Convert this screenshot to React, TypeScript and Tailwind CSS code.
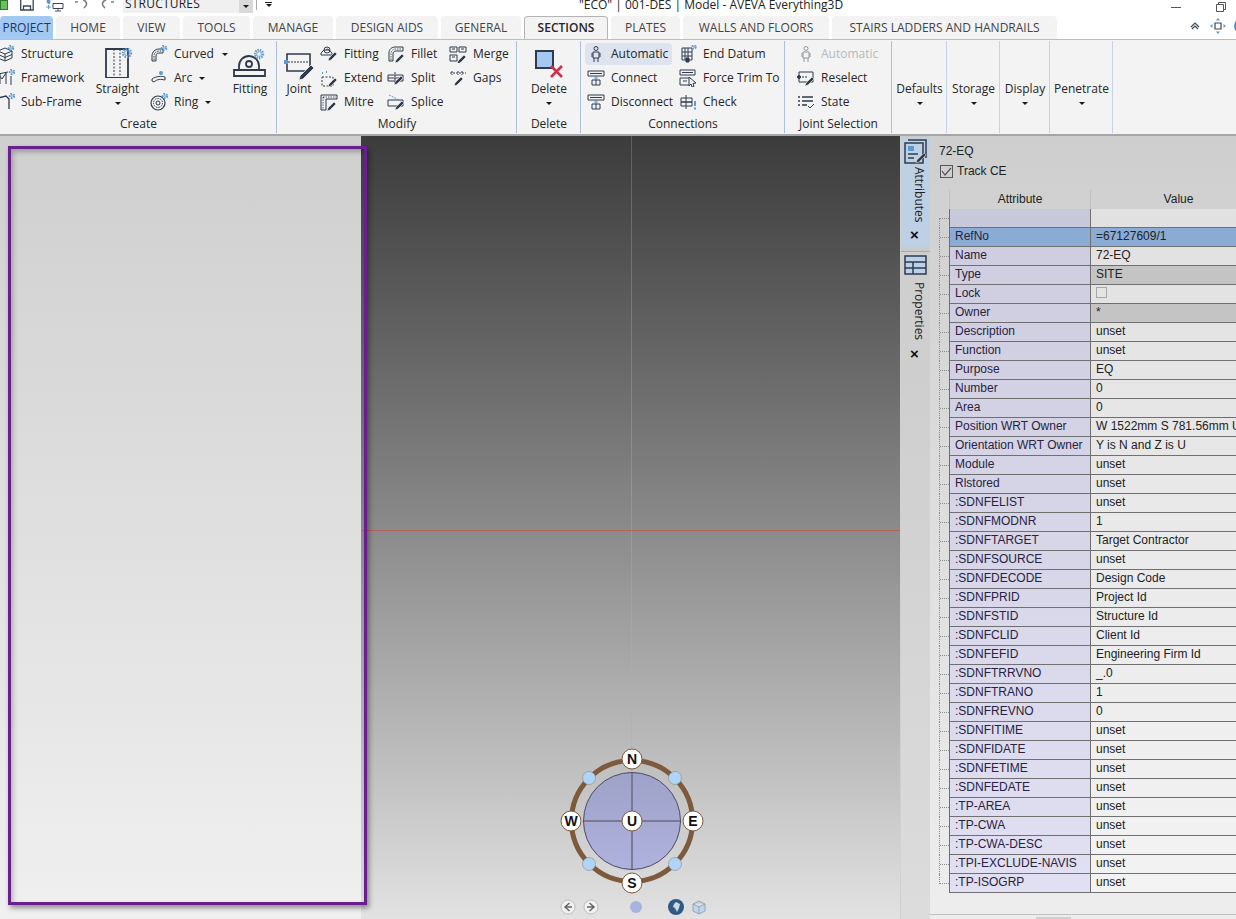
import type { ReactNode } from "react";

const ribbonFont = { fontFamily: '"Open Sans", "Noto Sans", sans-serif' };
const DARK = "#2f3b4c";
const BLUE = "#5b9bd5";

function Gear({ cx, cy, r = 3.5 }: { cx: number; cy: number; r?: number }) {
  return (
    <g fill="none" stroke={BLUE}>
      <circle cx={cx} cy={cy} r={r} strokeWidth="2.4" strokeDasharray="1.4 1" />
      <circle cx={cx} cy={cy} r={r - 1.6} strokeWidth="0.8" />
    </g>
  );
}

function Pencil({ x, y }: { x: number; y: number }) {
  return <path d={`M${x} ${y}l6-6 2 2-6 6-3 1z`} fill={DARK} stroke="#f3f3f3" strokeWidth="0.6" />;
}

function Ico({ children, w = 18, h = 18 }: { children: ReactNode; w?: number; h?: number }) {
  return (
    <svg width={w} height={h} viewBox={`0 0 ${w} ${h}`} fill="none" stroke={DARK} strokeWidth="1" className="shrink-0">
      {children}
    </svg>
  );
}

const icons: Record<string, ReactNode> = {
  structure: (
    <>
      <path d="M1 6l7-3 7 3v7l-7 3-7-3zM1 6l7 3 7-3M8 9v7M1 9.500l7 3 7-3" />
      <Gear cx={14} cy={3} r={2} />
    </>
  ),
  framework: (
    <>
      <path d="M1 5l10-2M3 5v10M9 4v11M14 7v9M1 5l4 5M9 4l-4 6" />
      <Gear cx={15} cy={3} r={2} />
    </>
  ),
  subframe: (
    <>
      <path d="M1 5l8-2 3 3v10M1 5v10" strokeWidth="1.300" />
      <Gear cx={15} cy={3} r={2} />
    </>
  ),
  curved: (
    <>
      <path d="M2 16v-5c0-4 3-7 7-7h4v4H9c-2 0-3 1-3 3v5z" />
      <path d="M4 15v-4c0-3 2-5 5-5h3" strokeDasharray="1.500 1" />
      <Gear cx={14} cy={3} r={2} />
    </>
  ),
  arc: (
    <>
      <path d="M2 10c4-3 10-3 13-2v3c-4-1-8-1-11 2l-2-1z" />
      <circle cx="11" cy="4" r="2" fill={BLUE} stroke="none" />
    </>
  ),
  ring: (
    <>
      <circle cx="8" cy="10" r="7" strokeWidth="1.200" />
      <circle cx="8" cy="10" r="4.500" strokeDasharray="1.500 1" />
      <circle cx="8" cy="10" r="2" />
      <Gear cx={15} cy={3} r={2} />
    </>
  ),
  fitting: (
    <>
      <path d="M1 8l3-3h5l3 3v2H1zM6 5a2 2 0 0 1 3 0" />
      <circle cx="7" cy="5" r="3" />
      <Pencil x={9} y={13} />
    </>
  ),
  extend: (
    <>
      <path d="M2 8h11v9H2z" strokeDasharray="2 1.500" />
      <path d="M6 3h1M2 4h1" strokeWidth="2" stroke={BLUE} />
      <Pencil x={9} y={15} />
    </>
  ),
  mitre: (
    <>
      <path d="M1 2h16v4H6v11H1z" />
      <path d="M3 4l2 2M3 4h13M3 4v12" strokeDasharray="1.500 1" strokeWidth="0.800" />
      <Pencil x={8} y={15} />
    </>
  ),
  fillet: (
    <>
      <path d="M2 16V8c0-4 3-6 6-6h8v4H9c-2 0-3 1-3 3v7z" />
      <path d="M4 15V8c0-2 2-4 4-4h7" strokeDasharray="1.500 1" strokeWidth="0.800" />
      <Pencil x={9} y={15} />
    </>
  ),
  split: (
    <>
      <path d="M1 6h15v6H1zM1 9h15" />
      <path d="M8 3v12" strokeDasharray="2 1" />
      <Pencil x={8} y={13} />
    </>
  ),
  splice: (
    <>
      <path d="M1 7h15v6H1z" />
      <path d="M2 2l14 7" stroke={BLUE} strokeDasharray="2 1" />
      <Pencil x={9} y={14} />
    </>
  ),
  merge: (
    <>
      <path d="M1 2h7v5H1zM10 2h7v5h-7zM1 10h7v6H1z" />
      <path d="M3 4h3M12 4h3M3 12h3" />
      <Pencil x={9} y={16} />
    </>
  ),
  gaps: (
    <>
      <path d="M1 4h16M3 2v4M9 2v4M13 2v4" strokeDasharray="2 1" />
      <Pencil x={6} y={14} />
    </>
  ),
  man: (
    <>
      <circle cx="9" cy="3.500" r="2" />
      <path d="M6 7h6v6H6zM7 13v4M11 13v4M5 8v4M13 8v4" />
    </>
  ),
  connect: (
    <>
      <path d="M1 2h16v5H1zM3 4.500h12" />
      <path d="M9 7v4M7 9h4" stroke={BLUE} />
      <path d="M5 11h8v5H5zM9 11v5" />
    </>
  ),
  datum: (
    <>
      <path d="M3 3h10v12H3zM6 3v12M9 3v12M3 7h10M3 11h10" />
      <path d="M7 13h3v4H7z" fill={DARK} />
      <Gear cx={15} cy={2} r={1.600} />
    </>
  ),
  force: (
    <>
      <path d="M1 1h15v5H1zM3 3.500h11M1 9h10v7H1zM4 12h4" />
      <path d="M10 8l7 6-3 .5 1 3-2 .5-1-3-2 2z" fill="#f3f3f3" />
    </>
  ),
  check: (
    <>
      <path d="M2 5h11v4H2zM2 9h11v4H2zM7 2v14" />
      <path d="M16 8v5M16 14.500v2" stroke={BLUE} strokeWidth="2" />
    </>
  ),
  reselect: (
    <>
      <path d="M2 3h14v10H2z" />
      <path d="M2 8h8" strokeDasharray="2 1" />
      <circle cx="2" cy="8" r="1.500" fill={DARK} />
      <Pencil x={9} y={14} />
    </>
  ),
  state: (
    <>
      <path d="M1 4h2M5 4h11M1 8h2M5 8h11M1 12h2M5 12h5" strokeWidth="1.500" />
      <path d="M11 13l2 2 4-4" stroke={DARK} />
    </>
  ),
};

function Small({
  icon,
  label,
  caret,
  active,
  disabled,
  w,
}: {
  icon: string;
  label: string;
  caret?: number;
  active?: boolean;
  disabled?: boolean;
  w?: string;
}) {
  return (
    <div
      className={`flex items-center ${active ? "my-px h-[22px] rounded-sm bg-[#dde4ef]" : "h-6"} ${w ?? ""} ${disabled ? "text-[#808080] opacity-50" : ""}`}
    >
      <span className="flex w-[18px] shrink-0">
        <Ico>{icons[icon]}</Ico>
      </span>
      <span className={`ml-[6px] whitespace-nowrap ${disabled ? "opacity-100" : ""}`}>{label}</span>
      {caret ? <Caret className={caret === 1 ? "ml-2" : "ml-[7px]"} /> : null}
    </div>
  );
}

function Caret({ className = "" }: { className?: string }) {
  return <span className={`inline-block h-0 w-0 border-x-[3.500px] border-t-[3.500px] border-x-transparent border-t-[#1a1a1a] ${className}`} />;
}

function Big({ icon, label, className = "" }: { icon?: ReactNode; label: string; className?: string }) {
  return (
    <div className={`flex flex-col items-center ${className}`}>
      <div className="flex h-[39px] items-center justify-center">{icon}</div>
      <div className="whitespace-nowrap leading-4">{label}</div>
      {label !== "Fitting" && label !== "Joint" && <Caret className="mt-[5px]" />}
    </div>
  );
}

function Group({ label, w, children, last }: { label?: string; w: string; children?: ReactNode; last?: boolean }) {
  return (
    <div className={`relative flex h-full shrink-0 flex-col ${w}`}>
      <div className="flex h-[75px] overflow-hidden pt-[2px]">{children}</div>
      <div className="text-center leading-[18px]">{label}</div>
      <div className={`absolute right-0 top-[1px] h-[92px] w-px ${last ? "bg-[#c5d3e6]" : "bg-[#a9bfdc]"}`} />
    </div>
  );
}

function Tab({ label, w, active, project }: { label: string; w: string; active?: boolean; project?: boolean }) {
  return (
    <div
      className={`flex h-full shrink-0 items-center justify-center whitespace-nowrap rounded-t-[4px] ${w} ${
        project
          ? "bg-[#a3c8f2] text-[#1c3a60]"
          : active
            ? "z-10 -mb-px h-[24px] self-start border border-b-0 border-[#b4b4b4] bg-[#f3f3f3] font-semibold text-[#262626]"
            : "bg-[#f3f3f3] text-[#444]"
      }`}
    >
      {label}
    </div>
  );
}

function TitleBar() {
  return (
    <div className="flex h-4 items-start overflow-hidden bg-white text-[#222]">
      <div className="h-[10px] w-2 border border-[#2b7a2b] bg-[#6cbf5a]" />
      <svg width="14" height="11" viewBox="0 0 14 11" fill="none" stroke="#3b4654" strokeWidth="1.300" className="ml-3">
        <path d="M.7-2h10.500l2 2v10H.7zM3.500 10V6h7v4" />
      </svg>
      <svg width="18" height="12" viewBox="0 0 18 12" fill="none" stroke="#3b4654" className="ml-3">
        <path d="M7 3.500h10v5H7zM12 8.500v2M9 11h6M3 0v4" />
        <circle cx="2.500" cy="1.500" r="2" fill="#5b9bd5" stroke="none" />
        <path d="M0 7h5M2.500 5v4" stroke="#5b9bd5" />
      </svg>
      <svg width="15" height="9" viewBox="0 0 15 9" fill="none" stroke="#7f7f7f" strokeWidth="1.600" className="ml-[10px]">
        <path d="M1 2h3M9 0c4 1 5 5 1 8" />
      </svg>
      <svg width="15" height="9" viewBox="0 0 15 9" fill="none" stroke="#7f7f7f" strokeWidth="1.600" className="ml-[11px]">
        <path d="M14 2h-3M6 0C2 1 1 5 5 8" />
      </svg>
      <div className="-mt-[1px] ml-2 flex h-[14px] w-[130px] items-center justify-between bg-[#f0f0f0]">
        <span className="-mt-[5px] ml-[2px] text-[12px] tracking-[0.2px]">STRUCTURES</span>
        <span className="flex h-full w-[14px] items-center justify-center bg-[#d9d9d9]">
          <Caret />
        </span>
      </div>
      <div className="ml-[3px] h-[10px] w-px bg-[#aaa]" />
      <div className="ml-2 flex w-[7px] flex-col items-center">
        <div className="mt-[2px] h-px w-[7px] bg-[#222]" />
        <Caret className="mt-[1px]" />
      </div>
      <div className="ml-[307px] -mt-[3px] whitespace-nowrap text-[12px] leading-4">"ECO" | 001-DES | Model - AVEVA Everything3D</div>
      <div className="ml-[328px] mt-[7px] h-px w-[10px] bg-[#555]" />
      <svg width="10" height="10" viewBox="0 0 10 10" fill="none" stroke="#555" className="ml-[35px] mt-[2px]">
        <path d="M.5 2.500h7v7h-7zM2.500 2.500v-2h7v7h-2" />
      </svg>
    </div>
  );
}

function TabRow() {
  return (
    <div className="flex h-6 items-end border-b border-[#bdbdbd] bg-white pl-0 text-[#444]">
      <div className="flex h-[23px] gap-[3px]">
        <Tab project label="PROJECT" w="w-[53px]" />
        <Tab label="HOME" w="w-[64px]" />
        <Tab label="VIEW" w="w-[57px]" />
        <Tab label="TOOLS" w="w-[67px]" />
        <Tab label="MANAGE" w="w-[80px]" />
        <Tab label="DESIGN AIDS" w="w-[102px]" />
        <Tab label="GENERAL" w="w-[80px]" />
        <Tab active label="SECTIONS" w="w-[84px]" />
        <Tab label="PLATES" w="w-[69px]" />
        <Tab label="WALLS AND FLOORS" w="w-[146px]" />
        <Tab label="STAIRS LADDERS AND HANDRAILS" w="w-[225px]" />
      </div>
      <div className="mb-[5px] ml-[133px] flex items-center">
        <svg width="10" height="10" viewBox="0 0 10 10" fill="none" stroke="#3b4654" strokeWidth="1.200">
          <path d="M1 6l4-4 4 4M2 8l3-3 3 3" />
        </svg>
        <svg width="16" height="16" viewBox="0 0 16 16" fill="none" className="ml-[10px]">
          <path d="M5 5h6v6H5z" stroke="#3b4654" strokeWidth="1.200" />
          <path d="M8 0l2 2.500H6zM8 16l2-2.500H6zM0 8l2.500-2v4zM16 8l-2.500-2v4z" fill="#5b9bd5" />
        </svg>
        <div className="ml-2 h-4 w-4 rounded-full bg-[#4f8fd0]" />
      </div>
    </div>
  );
}

function Ribbon() {
  return (
    <div className="flex h-[96px] shrink-0 overflow-hidden border-b-2 border-[#a6a6a6] bg-[#f3f3f3] text-[#262626]">
      <Group label="Create" w="w-[277px]">
        <div className="-ml-[3px] w-[100px] shrink-0">
          <Small icon="structure" label="Structure" />
          <Small icon="framework" label="Framework" />
          <Small icon="subframe" label="Sub-Frame" />
        </div>
        <Big
          label="Straight"
          className="w-[41px] shrink-0"
          icon={
            <svg width="30" height="32" viewBox="0 0 30 32" fill="none" stroke={DARK} className="ml-1">
              <path d="M1 3h22v29H1z" strokeWidth="1.800" />
              <path d="M9 3v29M15 3v29" strokeDasharray="2 1.500" />
              <Gear cx={22} cy={7} r={4} />
            </svg>
          }
        />
        <div className="ml-3 w-[80px] shrink-0">
          <Small icon="curved" label="Curved" caret={1} />
          <Small icon="arc" label="Arc" caret={2} />
          <Small icon="ring" label="Ring" caret={2} />
        </div>
        <Big
          label="Fitting"
          className="w-[40px] shrink-0"
          icon={
            <svg width="34" height="32" viewBox="0 0 34 32" fill="none" stroke={DARK} strokeWidth="1.800">
              <path d="M1 24h31v6H1zM6 24V20a10 10 0 0 1 20 0v4" />
              <circle cx="16" cy="18" r="3" />
              <Gear cx={26} cy={8} r={4} />
            </svg>
          }
        />
      </Group>
      <Group label="Modify" w="w-[240px]">
        <Big
          label="Joint"
          className="ml-1 w-[36px] shrink-0"
          icon={
            <svg width="32" height="28" viewBox="0 0 32 28" fill="none" stroke={DARK} strokeWidth="1.600" className="mt-2">
              <path d="M4 2h23v17H4z" />
              <path d="M5 10h21" strokeWidth="1" strokeDasharray="2 1" />
              <path d="M1 8h4v4H1z" fill={BLUE} stroke="none" />
              <path d="M17 24l11-11 3 3-11 11-4 1z" fill={DARK} stroke="#f3f3f3" strokeWidth="0.800" />
            </svg>
          }
        />
        <div className="ml-[3px] w-[67px] shrink-0">
          <Small icon="fitting" label="Fitting" />
          <Small icon="extend" label="Extend" />
          <Small icon="mitre" label="Mitre" />
        </div>
        <div className="w-[62px] shrink-0">
          <Small icon="fillet" label="Fillet" />
          <Small icon="split" label="Split" />
          <Small icon="splice" label="Splice" />
        </div>
        <div className="shrink-0">
          <Small icon="merge" label="Merge" />
          <Small icon="gaps" label="Gaps" />
        </div>
      </Group>
      <Group label="Delete" w="w-[64px]">
        <Big
          label="Delete"
          className="w-full"
          icon={
            <svg width="28" height="28" viewBox="0 0 28 28" fill="none" className="mt-1">
              <path d="M1 1h17v17H1z" fill="#a3c8f2" stroke={DARK} strokeWidth="2" />
              <path d="M16 16l11 11M27 16L16 27" stroke="#c8324f" strokeWidth="2.600" />
            </svg>
          }
        />
      </Group>
      <Group label="Connections" w="w-[204px]">
        <div className="ml-[4px] w-[94px] shrink-0">
          <Small active icon="man" label="Automatic" w="w-[87px] pl-[2px]" />
          <div className="ml-[2px]">
            <Small icon="connect" label="Connect" />
            <Small icon="connect" label="Disconnect" />
          </div>
        </div>
        <div className="shrink-0">
          <Small icon="datum" label="End Datum" />
          <Small icon="force" label="Force Trim To" />
          <Small icon="check" label="Check" />
        </div>
      </Group>
      <Group label="Joint Selection" w="w-[107px]">
        <div className="ml-3 shrink-0">
          <Small disabled icon="man" label="Automatic" />
          <Small icon="reselect" label="Reselect" />
          <Small icon="state" label="State" />
        </div>
      </Group>
      <Group w="w-[55px]" last>
        <Big label="Defaults" className="w-full" />
      </Group>
      <Group w="w-[53px]" last>
        <Big label="Storage" className="w-full" />
      </Group>
      <Group w="w-[50px]" last>
        <Big label="Display" className="w-full" />
      </Group>
      <Group w="w-[63px]" last>
        <Big label="Penetrate" className="w-full" />
      </Group>
    </div>
  );
}

function Compass() {
  const dirs = [
    { t: "N", x: 80, y: 18 },
    { t: "S", x: 80, y: 142 },
    { t: "W", x: 19, y: 80 },
    { t: "E", x: 141, y: 80 },
    { t: "U", x: 80, y: 80 },
  ];
  return (
    <svg width="160" height="160" viewBox="0 0 160 160" className="absolute left-[191px] top-[605px]">
      <defs>
        <linearGradient id="disc" x1="0" y1="0" x2="0" y2="1">
          <stop offset="0" stopColor="#9ea2c8" />
          <stop offset="1" stopColor="#aeb2de" />
        </linearGradient>
      </defs>
      <circle cx="80" cy="80" r="60.500" fill="none" stroke="#7d5a3c" strokeWidth="5" />
      <circle cx="80" cy="80" r="48.500" fill="url(#disc)" stroke="#4a4a60" />
      <path d="M80 32v96M32 80h96" stroke="#6a6a84" strokeWidth="1.500" />
      {[
        [37, 37],
        [123, 37],
        [37, 123],
        [123, 123],
      ].map(([x, y]) => (
        <circle key={`${x}-${y}`} cx={x} cy={y} r="6.500" fill="#b0d4f8" stroke="#8a8a8a" strokeWidth="0.600" />
      ))}
      {dirs.map((d) => (
        <g key={d.t}>
          <circle cx={d.x} cy={d.y} r="10" fill="#fff" stroke="#7d5a3c" />
          <text x={d.x} y={d.y + 5} textAnchor="middle" fontSize="14" fontWeight="700" fontFamily="Liberation Sans, sans-serif" fill="#111">
            {d.t}
          </text>
        </g>
      ))}
    </svg>
  );
}

function ViewNav() {
  return (
    <div className="absolute bottom-[4px] left-[199px] flex h-4 items-center">
      {["M9.500 4L5 8l4.500 4M5 8h7", "M6.500 4L11 8l-4.500 4M11 8H4"].map((d) => (
        <svg key={d} width="16" height="16" viewBox="0 0 16 16" fill="none" className="mr-[7px]">
          <circle cx="8" cy="8" r="7" fill="#f2f2f2" stroke="#bdbdbd" />
          <path d={d} stroke="#666" strokeWidth="1.500" />
        </svg>
      ))}
      <div className="ml-[24px] h-3 w-3 rounded-full bg-[#a8b4e0]" />
      <svg width="16" height="16" viewBox="0 0 16 16" className="ml-[26px]">
        <circle cx="8" cy="8" r="8" fill="#2f5a85" />
        <path d="M8 3l4 2-1 4-2 4-2-4-2-1 1-3z" fill="#cfd8e0" />
      </svg>
      <svg width="14" height="15" viewBox="0 0 14 15" fill="#c3d5e8" stroke="#8fa5bd" className="ml-[8px]">
        <path d="M7 1l6 3v7l-6 3-6-3V4zM1 4l6 3 6-3M7 7v7" />
      </svg>
    </div>
  );
}

const rows: [string, string][] = [
  ["RefNo", "=67127609/1"],
  ["Name", "72-EQ"],
  ["Type", "SITE"],
  ["Lock", ""],
  ["Owner", "*"],
  ["Description", "unset"],
  ["Function", "unset"],
  ["Purpose", "EQ"],
  ["Number", "0"],
  ["Area", "0"],
  ["Position WRT Owner", "W 1522mm S 781.56mm U 0mm"],
  ["Orientation WRT Owner", "Y is N and Z is U"],
  ["Module", "unset"],
  ["Rlstored", "unset"],
  [":SDNFELIST", "unset"],
  [":SDNFMODNR", "1"],
  [":SDNFTARGET", "Target Contractor"],
  [":SDNFSOURCE", "unset"],
  [":SDNFDECODE", "Design Code"],
  [":SDNFPRID", "Project Id"],
  [":SDNFSTID", "Structure Id"],
  [":SDNFCLID", "Client Id"],
  [":SDNFEFID", "Engineering Firm Id"],
  [":SDNFTRRVNO", "_.0"],
  [":SDNFTRANO", "1"],
  [":SDNFREVNO", "0"],
  [":SDNFITIME", "unset"],
  [":SDNFIDATE", "unset"],
  [":SDNFETIME", "unset"],
  [":SDNFEDATE", "unset"],
  [":TP-AREA", "unset"],
  [":TP-CWA", "unset"],
  [":TP-CWA-DESC", "unset"],
  [":TPI-EXCLUDE-NAVIS", "unset"],
  [":TP-ISOGRP", "unset"],
];

function Row({ name, value, i }: { name: string; value: string; i: number }) {
  const selected = name === "RefNo";
  const readonly = name === "Type" || name === "Owner";
  const last = i === rows.length - 1;
  return (
    <div className="flex h-[19px]">
      <div className={`relative w-[10px] shrink-0 ${last ? "h-[10px]" : ""} border-l border-dotted border-[#8c8c8c]`}>
        <div className="mt-[9px] border-t border-dotted border-[#8c8c8c]" />
      </div>
      <div
        className={`w-[142px] shrink-0 border-b border-l border-r border-[#707070] pl-[5px] leading-[17px] text-[#2a2240] ${selected ? "bg-[#8aabd3]" : "bg-[#c4c4ff]/30"}`}
      >
        {name}
      </div>
      <div
        className={`w-[175px] shrink-0 overflow-hidden whitespace-nowrap border-b border-[#707070] pl-[5px] leading-[17px] text-[#222] ${
          selected ? "bg-[#8aabd3]" : readonly ? "bg-[#c4c4c4]" : "bg-white/35"
        }`}
      >
        {name === "Lock" ? <div className="mt-[2px] h-[11px] w-[11px] border border-[#a8a8a8] bg-[#e4e4e4]" /> : value}
      </div>
    </div>
  );
}

function SideTab({ label, active, icon }: { label: string; active?: boolean; icon: ReactNode }) {
  return (
    <div
      className={`flex flex-col items-center ${active ? "h-[110px] bg-[#bdd0e4]" : "mt-[4px] h-[110px] border-t border-[#a9a9a9] bg-[#cfcfcf]"}`}
    >
      <div className="mt-[2px] flex h-[26px] items-center">{icon}</div>
      <div className={`ml-[6px] h-[56px] whitespace-nowrap leading-4 ${active ? "mt-[2px]" : "mt-[6px]"} [writing-mode:vertical-rl]`}>{label}</div>
      <div className={`-ml-[2px] text-[15px] font-bold leading-none text-[#111] ${active ? "mt-[4px]" : "mt-[8px]"}`} style={{ fontFamily: "Liberation Sans, sans-serif" }}>
        ×
      </div>
    </div>
  );
}

function RightPanel() {
  return (
    <div className="flex w-[336px] shrink-0">
      <div className="w-[30px] shrink-0 border-l border-[#d0d0d0] bg-gradient-to-b from-[#c8c8c8] to-[#dcdcdc] pt-px text-[#222]" style={ribbonFont}>
        <SideTab
          active
          label="Attributes"
          icon={
            <svg width="24" height="26" viewBox="0 0 24 26" fill="none" stroke={DARK} strokeWidth="1.500">
              <path d="M4 1h18v18M1 4h18v20H1z" />
              <path d="M4 7h6v5H4z" fill={BLUE} stroke="none" />
              <path d="M4 15h10M4 19h6" />
              <path d="M13 21l7-7 2 2-7 7-3 1z" fill={DARK} stroke="#ccc" strokeWidth="0.600" />
            </svg>
          }
        />
        <SideTab
          label="Properties"
          icon={
            <svg width="23" height="20" viewBox="0 0 23 20" fill="#bcd0ea" stroke={DARK} strokeWidth="1.500">
              <path d="M1 1h21v18H1zM1 7h21M1 13h21M9 7v12" />
            </svg>
          }
        />
      </div>
      <div className="flex min-w-0 flex-1 flex-col bg-gradient-to-b from-[#cecece] to-[#eeeeee] text-[12px] text-[#222]" style={{ fontFamily: "Liberation Sans, sans-serif" }}>
        <div className="ml-[9px] mt-[7px] leading-4">72-EQ</div>
        <label className="ml-[10px] mt-[4px] flex h-[16px] items-center">
          <span className="flex h-[13px] w-[13px] items-center justify-center border border-[#555]">
            <svg width="11" height="9" viewBox="0 0 11 9" fill="none" stroke="#555" strokeWidth="1.200">
              <path d="M1 4l3 4 6-7" />
            </svg>
          </span>
          <span className="ml-1">Track CE</span>
        </label>
        <div className="ml-[9px] mt-[11px] overflow-hidden">
          <div className="ml-[10px] flex h-[19px] leading-[19px]">
            <div className="w-[142px] shrink-0 border-x border-[#c0c0c0] text-center">Attribute</div>
            <div className="w-[175px] shrink-0 text-center">Value</div>
          </div>
          <div className="flex h-[19px]">
            <div className="w-[10px] shrink-0">
              <div className="ml-0 mt-[9px] h-[10px] border-l border-t border-dotted border-[#8c8c8c]" />
            </div>
            <div className="w-[142px] shrink-0 border-x border-b border-[#707070] bg-[#c4c4e0]/70" />
            <div className="w-[175px] shrink-0 border-b border-[#707070] bg-white/35" />
          </div>
          {rows.map(([n, v], i) => (
            <Row key={n} name={n} value={v} i={i} />
          ))}
        </div>
        <div className="mt-auto flex h-[5px] justify-center border-t border-[#c0c0c0] bg-[#ededed]">
          <div className="-ml-[60px] mt-[2px] h-[3px] w-[35px] bg-[#cfcfcf]" />
        </div>
      </div>
    </div>
  );
}

export default function App() {
  return (
    <div className="relative flex h-[919px] w-[1236px] flex-col overflow-hidden bg-white text-[12px]" style={ribbonFont}>
      <TitleBar />
      <TabRow />
      <Ribbon />
      <div className="flex min-h-0 flex-1">
        <div className="w-[361px] shrink-0 bg-gradient-to-b from-[#cfcfcf] to-[#f0f0f0]" />
        <div className="relative min-w-0 flex-1 bg-gradient-to-b from-[#3c3c3c] to-[#e2e2e2]">
          <div className="absolute bottom-[98px] left-[270px] top-0 w-px bg-gradient-to-b from-[#1f8a1f] to-[#a8d0a8]" />
          <div className="absolute left-0 right-0 top-[394px] h-px bg-[#b8605c]" />
          <Compass />
          <ViewNav />
        </div>
        <RightPanel />
      </div>
      {/* annotation drawn over the screenshot */}
      <div className="absolute left-2 top-[146px] h-[759px] w-[359px] border-[3px] border-[#6a1f8f] shadow-[2px_3px_5px_rgba(0,0,0,0.4),inset_2px_3px_5px_rgba(0,0,0,0.25)]" />
    </div>
  );
}
